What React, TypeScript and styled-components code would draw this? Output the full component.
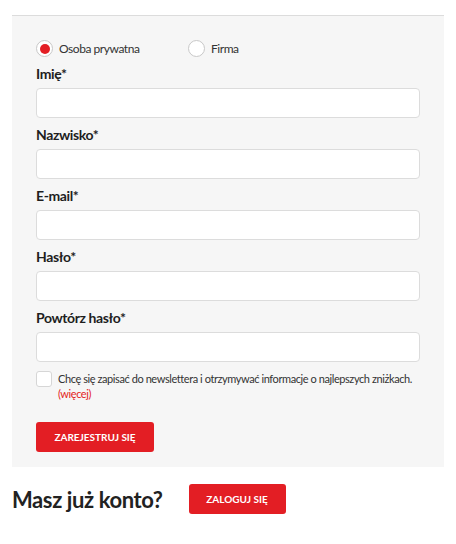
import React, {useState} from 'react';
import styled, {createGlobalStyle} from 'styled-components';

const GlobalStyle = createGlobalStyle`
  body {
    margin: 0;
    background: #fff;
    font-family: Lato, "Open Sans", sans-serif;
    color: #222;
  }
`;

const Page = styled.div`
  padding: 15px 12px 0;
`;

const Panel = styled.form`
  border-top: 1px solid #dcdcdc;
  background: #f6f6f6;
  padding: 24px 24px 15px;
`;

const RadioRow = styled.div`
  display: flex;
  align-items: center;
  height: 17px;
`;

const RadioOption = styled.label`
  display: flex;
  align-items: center;
  gap: 6px;
  min-width: 152px;
  font-size: 12px;
  letter-spacing: -0.45px;
  color: #333;
  cursor: pointer;
`;

const RadioCircle = styled.span<{checked: boolean}>`
  width: 17px;
  height: 17px;
  box-sizing: border-box;
  border: 1px solid #c8c8c8;
  border-radius: 50%;
  background: #fff;
  display: flex;
  align-items: center;
  justify-content: center;
  &::after {
    content: '';
    width: 10px;
    height: 10px;
    border-radius: 50%;
    background: ${p => (p.checked ? '#e31e24' : 'transparent')};
  }
`;

const Field = styled.div`
  margin-top: 7px;
`;

const Label = styled.div`
  font-size: 14px;
  font-weight: 700;
  letter-spacing: -0.4px;
  line-height: 20px;
  color: #1e1e1e;
  margin-bottom: 4px;
`;

const Input = styled.input`
  display: block;
  width: 100%;
  height: 30px;
  box-sizing: border-box;
  border: 1px solid #dcdcdc;
  border-radius: 4px;
  background: #fff;
  outline: none;
`;

const NewsletterRow = styled.label`
  display: flex;
  align-items: flex-start;
  gap: 6px;
  margin-top: 9px;
  font-size: 11px;
  letter-spacing: -0.42px;
  line-height: 15px;
  color: #333;
`;

const CheckBox = styled.span`
  flex: none;
  width: 16px;
  height: 16px;
  box-sizing: border-box;
  border: 1px solid #d6d6d6;
  border-radius: 3px;
  background: #fff;
`;

const NewsletterText = styled.span`
  white-space: nowrap;
`;

const More = styled.a`
  color: #e31e24;
  text-decoration: none;
`;

const RedButton = styled.button<{width: number}>`
  width: ${p => p.width}px;
  height: 30px;
  padding: 0;
  border: none;
  border-radius: 3px;
  background: #e31e24;
  color: #fff;
  font-family: Lato, sans-serif;
  font-size: 10px;
  font-weight: 700;
  cursor: pointer;
`;

const SubmitRow = styled.div`
  margin-top: 21px;
`;

const LoginRow = styled.div`
  display: flex;
  align-items: center;
  gap: 26px;
  margin-top: 17px;
`;

const LoginTitle = styled.h2`
  margin: 0;
  font-size: 22px;
  font-weight: 700;
  letter-spacing: -0.4px;
  color: #222;
`;

const fields = ['Imię*', 'Nazwisko*', 'E-mail*', 'Hasło*', 'Powtórz hasło*'];

export default function App() {
  const [type, setType] = useState<'private' | 'company'>('private');

  return (
    <Page>
      <GlobalStyle/>
      <Panel onSubmit={e => e.preventDefault()}>
        <RadioRow>
          <RadioOption onClick={() => setType('private')}>
            <RadioCircle checked={type === 'private'}/>
            Osoba prywatna
          </RadioOption>
          <RadioOption onClick={() => setType('company')}>
            <RadioCircle checked={type === 'company'}/>
            Firma
          </RadioOption>
        </RadioRow>
        {fields.map(name =>
          <Field key={name}>
            <Label>{name}</Label>
            <Input type={name.startsWith('Has') || name.startsWith('Pow') ? 'password' : 'text'}/>
          </Field>
        )}
        <NewsletterRow>
          <CheckBox/>
          <NewsletterText>
            Chcę się zapisać do newslettera i otrzymywać informacje o najlepszych zniżkach.<br/>
            <More href="#">(więcej)</More>
          </NewsletterText>
        </NewsletterRow>
        <SubmitRow>
          <RedButton type="submit" width={118}>ZAREJESTRUJ SIĘ</RedButton>
        </SubmitRow>
      </Panel>
      <LoginRow>
        <LoginTitle>Masz już konto?</LoginTitle>
        <RedButton type="button" width={97}>ZALOGUJ SIĘ</RedButton>
      </LoginRow>
    </Page>
  );
}
